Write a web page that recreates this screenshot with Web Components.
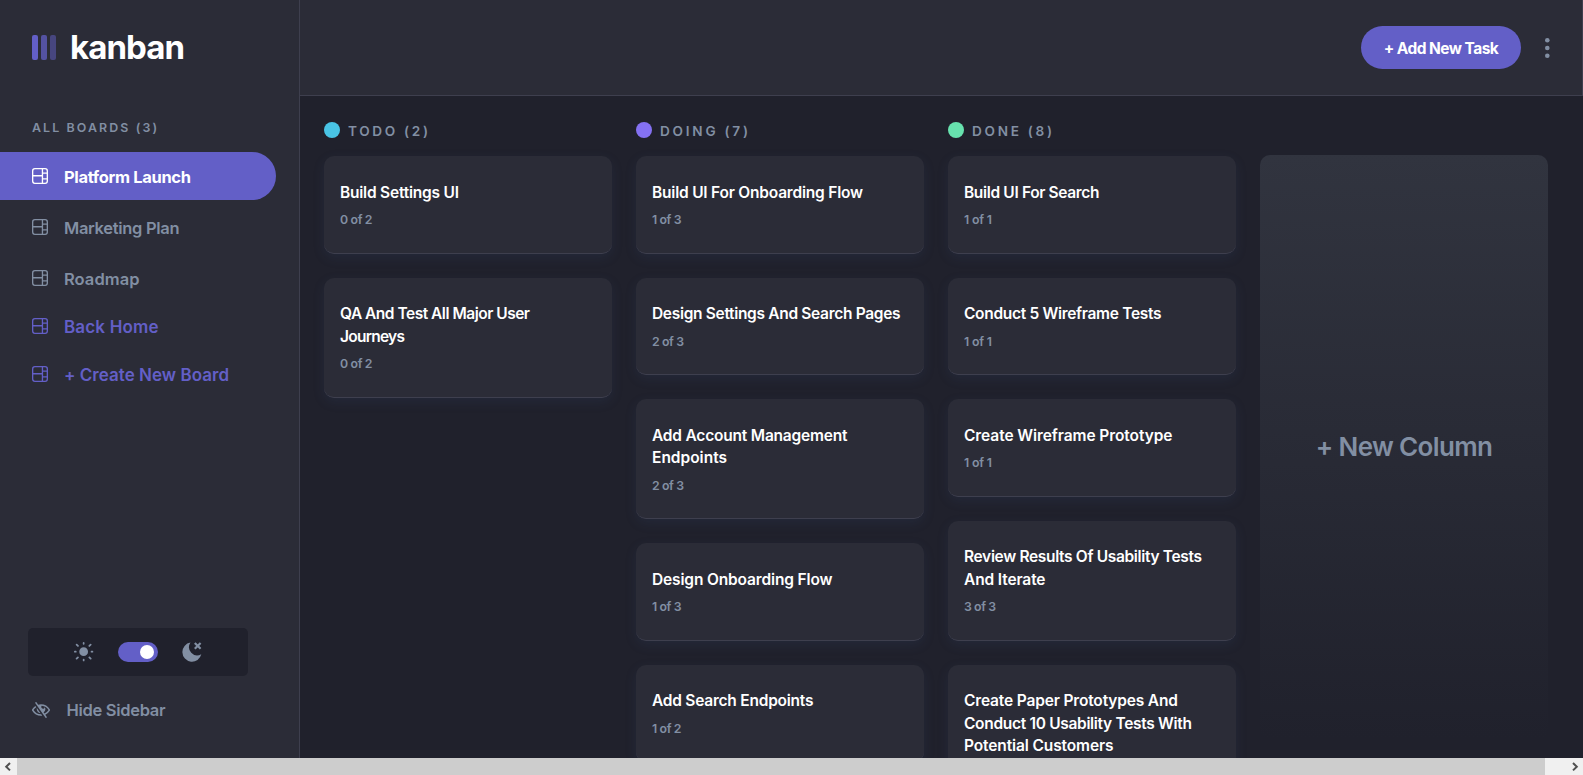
<!DOCTYPE html>
<html lang="en">
<head>
<meta charset="utf-8">
<title>Kanban</title>
<style>
html,body{margin:0;height:100%;overflow:hidden;background:#20212c}
body{font-family:Inter,"Liberation Sans",sans-serif;color:#fff}
</style>
</head>
<body>
<kanban-app></kanban-app>
<script>
const define=(name,html,setup)=>customElements.define(name,class extends HTMLElement{
  connectedCallback(){
    if(this.shadowRoot)return;
    const r=this.attachShadow({mode:'open'});
    const t=document.createElement('template');
    t.innerHTML=typeof html==='function'?html(this):html;
    r.append(t.content.cloneNode(true));
    if(setup)setup(this,r);
  }
});

// One line of text, tracked so that it spans w pixels.
define('fit-text',e=>`<style>:host{display:block;white-space:nowrap}span{display:inline-block}</style><span>${e.getAttribute('text')}</span>`,(e,r)=>{
  const s=r.querySelector('span'),w=+e.getAttribute('w'),n=e.getAttribute('text').length;
  const natural=s.getBoundingClientRect().width;
  s.style.letterSpacing=((w-natural)/(n-1)).toFixed(3)+'px';
});

define('board-icon',`<style>:host{display:block;width:16px;height:16px}svg{display:block}</style>
<svg width="16" height="16" viewBox="0 0 16 16"><path fill="currentColor" d="M0 2.889A2.889 2.889 0 0 1 2.889 0H13.11A2.889 2.889 0 0 1 16 2.889V13.11A2.888 2.888 0 0 1 13.111 16H2.89A2.889 2.889 0 0 1 0 13.111V2.89Zm1.333 5.555v4.667c0 .859.697 1.556 1.556 1.556h6.889V8.444H1.333Zm8.445-1.333V1.333h-6.89A1.556 1.556 0 0 0 1.334 2.89V7.11h8.445Zm4.889-1.333H11.11v4.444h3.556V5.778Zm0 5.778H11.11v3.11h2a1.556 1.556 0 0 0 1.556-1.555v-1.555Zm0-7.112V2.89a1.555 1.555 0 0 0-1.556-1.556h-2v3.111h3.556Z"/></svg>`);

define('nav-item',e=>`<style>
:host{display:flex;align-items:center;box-sizing:border-box;width:276px;height:48px;padding-left:32px;gap:16px;color:#828fa3;font-size:16.5px;font-weight:600;line-height:20px}
:host([active]){background:#635fc7;color:#fff;border-radius:0 24px 24px 0;font-weight:700}
:host([accent]){color:#635fc7;font-size:17px}
board-icon{flex:none}
fit-text{margin-top:2px}</style><board-icon></board-icon><fit-text text="${e.getAttribute('label')}" w="${e.getAttribute('w')}"></fit-text>`);

define('app-logo',`<style>:host{display:flex;align-items:center;gap:14px;padding:0 32px;height:95px;font-size:33px;font-weight:700;line-height:40px}
svg{display:block}fit-text{margin-top:-2px}</style>
<svg width="24" height="25" viewBox="0 0 24 25"><g fill="#635fc7"><rect width="6" height="25" rx="2"/><rect x="9" width="6" height="25" rx="2" opacity=".75"/><rect x="18" width="6" height="25" rx="2" opacity=".5"/></g></svg>
<fit-text text="kanban" w="115"></fit-text>`);

define('theme-switch',`<style>:host{display:flex;align-items:center;justify-content:center;gap:24px;width:220px;height:48px;margin-left:28px;background:#20212c;border-radius:5px}
svg{display:block}.t{width:32px;height:14px;padding:3px 4px;background:#635fc7;border-radius:10px;display:flex;justify-content:flex-end}.t i{width:14px;height:14px;border-radius:50%;background:#fff}</style>
<svg width="20" height="20" viewBox="0 0 19 19"><path fill="#828FA3" d="M9.167 15.833a.833.833 0 0 1 .833.834v.833a.833.833 0 0 1-1.667 0v-.833a.833.833 0 0 1 .834-.834ZM3.75 13.75a.833.833 0 0 1 .59 1.422l-1.25 1.25a.833.833 0 0 1-1.18-1.178l1.25-1.25a.833.833 0 0 1 .59-.244Zm10.833 0c.221 0 .433.088.59.244l1.25 1.25a.833.833 0 0 1-1.179 1.178l-1.25-1.25a.833.833 0 0 1 .59-1.422ZM9.167 5a4.167 4.167 0 1 1 0 8.334 4.167 4.167 0 0 1 0-8.334Zm-7.5 3.333a.833.833 0 0 1 0 1.667H.833a.833.833 0 1 1 0-1.667h.834Zm15.833 0a.833.833 0 0 1 0 1.667h-.833a.833.833 0 0 1 0-1.667h.833Zm-1.667-6.666a.833.833 0 0 1 .59 1.422l-1.25 1.25a.833.833 0 1 1-1.179-1.178l1.25-1.25a.833.833 0 0 1 .59-.244Zm-13.333 0c.221 0 .433.088.59.244l1.25 1.25a.833.833 0 0 1-1.18 1.178L1.91 3.09a.833.833 0 0 1 .59-1.422ZM9.167 0A.833.833 0 0 1 10 .833v.834a.833.833 0 1 1-1.667 0V.833A.833.833 0 0 1 9.167 0Z"/></svg>
<div class="t"><i></i></div>
<svg width="20" height="20" viewBox="0 0 20 20"><path fill="#828FA3" d="M8.474.593A9.6 9.6 0 1 0 19.3 12.3 8.2 8.2 0 0 1 8.474.593Z"/><path stroke="#828FA3" stroke-width="2.2" d="m12.8 1 5.8 5.8M18.6 1l-5.8 5.8"/></svg>`);

define('hide-sidebar',`<style>:host{display:flex;align-items:center;gap:16.5px;padding-left:32px;color:#828fa3;font-size:16.5px;font-weight:600;line-height:20px}svg{display:block}</style>
<svg width="18" height="16" viewBox="0 0 18 16"><path fill="currentColor" d="M8.522 11.223a4.252 4.252 0 0 1-3.654-5.22l3.654 5.22ZM9 12.25A8.685 8.685 0 0 1 1.5 8a8.612 8.612 0 0 1 2.76-2.864l-.86-1.23A10.112 10.112 0 0 0 .208 7.238a1.5 1.5 0 0 0 0 1.524A10.187 10.187 0 0 0 9 13.75c.414 0 .828-.025 1.239-.074l-1-1.43A8.88 8.88 0 0 1 9 12.25Zm8.792-3.488a10.14 10.14 0 0 1-4.486 4.046l1.504 2.148a.375.375 0 0 1-.092.523l-.648.453a.375.375 0 0 1-.523-.092L3.19 1.044A.375.375 0 0 1 3.282.52L3.93.068a.375.375 0 0 1 .523.092l1.735 2.479A10.308 10.308 0 0 1 9 2.25c3.746 0 7.031 2 8.792 4.988a1.5 1.5 0 0 1 0 1.524ZM16.5 8a8.674 8.674 0 0 0-6.755-4.219A1.75 1.75 0 1 0 12.75 5v-.001a4.25 4.25 0 0 1-1.154 5.366l.834 1.192A8.641 8.641 0 0 0 16.5 8Z"/></svg>
<fit-text text="Hide Sidebar" w="99"></fit-text>`);

define('side-bar',`<style>:host{display:flex;flex-direction:column;box-sizing:border-box;width:300px;height:100%;flex:none;background:#2b2c37;border-right:1px solid #3e3f4e}
h3{margin:25px 0 16px 32px;font-size:12.4px;font-weight:600;line-height:16px;color:#828fa3}
nav{display:flex;flex-direction:column}.g{margin-bottom:3px}
theme-switch{margin-top:auto}hide-sidebar{margin:24px 0 38px}</style>
<app-logo></app-logo>
<h3><fit-text text="ALL BOARDS (3)" w="125"></fit-text></h3>
<nav><nav-item class="g" active label="Platform Launch" w="127"></nav-item><nav-item class="g" label="Marketing Plan" w="115.5"></nav-item><nav-item label="Roadmap" w="75.5"></nav-item><nav-item accent label="Back Home" w="94.5"></nav-item><nav-item accent label="+ Create New Board" w="165"></nav-item></nav>
<theme-switch></theme-switch><hide-sidebar></hide-sidebar>`);

define('top-bar',`<style>:host{display:flex;align-items:center;justify-content:flex-end;box-sizing:border-box;height:96px;padding-right:32px;background:#2b2c37;border-bottom:1px solid #3e3f4e;border-right:1px solid #3e3f4e}
button{all:unset;display:flex;align-items:center;justify-content:center;width:160px;height:43px;border-radius:22px;background:#635fc7;font-size:15.5px;font-weight:700;line-height:20px;margin-right:24px}fit-text{margin-top:2px}svg{display:block}</style>
<button><fit-text text="+ Add New Task" w="115"></fit-text></button>
<svg width="5" height="20" viewBox="0 0 5 20" overflow="visible"><g fill="#828FA3"><circle cx="2.3" cy="2.3" r="2.3"/><circle cx="2.3" cy="10" r="2.3"/><circle cx="2.3" cy="17.7" r="2.3"/></g></svg>`);

define('task-card',e=>`<style>:host{display:block;box-sizing:border-box;padding:25.6px 16px 24.5px;background:#2b2c37;border-bottom:1px solid #3e3f4e;border-radius:10px;box-shadow:0 4px 12px rgba(54,78,126,.16)}
.l{font-size:15.5px;font-weight:600;line-height:22.4px}.s{font-size:12.3px;font-weight:600;line-height:16px;margin-top:8.1px;color:#828fa3}</style>
${e.getAttribute('lines').split('|').map(l=>{const[t,w]=l.split('~');return`<fit-text class="l" text="${t}" w="${w}"></fit-text>`}).join('')}
${e.getAttribute('sub')?`<fit-text class="s" text="${e.getAttribute('sub')}" w="${e.getAttribute('sw')}"></fit-text>`:''}`);

define('board-column',e=>`<style>:host{display:flex;flex-direction:column;gap:24px;width:288px;flex:none}
header{display:flex;align-items:flex-start;gap:8px;height:10px}
i{width:16px;height:16px;border-radius:50%;background:${e.getAttribute('color')}}
fit-text{font-size:13.6px;font-weight:600;line-height:18px;color:#828fa3}</style>
<header><i></i><fit-text text="${e.getAttribute('label')}" w="${e.getAttribute('w')}"></fit-text></header><slot></slot>`);

define('new-column',`<style>:host{display:flex;align-items:center;justify-content:center;width:288px;height:584px;flex:none;margin-top:33px;border-radius:10px;background:linear-gradient(180deg,#31343f,#20212c);color:#828fa3;font-size:26px;font-weight:600;line-height:32px}</style><fit-text text="+ New Column" w="177"></fit-text>`);

define('scroll-bar',`<style>:host{display:flex;height:17px;background:#f0f0f0}span{width:17px;height:17px}b{flex:1;background:#cdcdcd;margin-right:21px}svg{display:block}</style>
<span><svg width="17" height="17"><path d="M10 5 6.2 8.7l3.8 3.7" fill="none" stroke="#505050" stroke-width="2"/></svg></span><b></b><span><svg width="17" height="17"><path d="m7 5 3.8 3.7L7 12.4" fill="none" stroke="#505050" stroke-width="2"/></svg></span>`);

const C=(label,w,color,cards)=>`<board-column label="${label}" w="${w}" color="${color}">${cards.map(([l,s,sw])=>`<task-card lines="${l}" sub="${s||''}" sw="${sw||0}"></task-card>`).join('')}</board-column>`;
define('kanban-app',`<style>:host{display:flex;flex-direction:column;height:775px;overflow:hidden}
.app{display:flex;height:758px;min-height:0}main{flex:1;min-width:0;display:flex;flex-direction:column}
section{display:flex;flex:1;min-height:0;gap:24px;padding:26px 24px 0;align-items:flex-start;overflow:hidden;background:#20212c}</style>
<div class="app"><side-bar></side-bar><main><top-bar></top-bar><section>
${C('TODO (2)',80,'#49c4e5',[['Build Settings UI~119','0 of 2',32.5],['QA And Test All Major User~190|Journeys~65','0 of 2',32.5]])}
${C('DOING (7)',88,'#8471f2',[['Build UI For Onboarding Flow~211','1 of 3',29.5],['Design Settings And Search Pages~248.5','2 of 3',32],['Add Account Management~195.5|Endpoints~75','2 of 3',32],['Design Onboarding Flow~180.5','1 of 3',29.5],['Add Search Endpoints~161.5','1 of 2',29.5]])}
${C('DONE (8)',80,'#67e2ae',[['Build UI For Search~135.5','1 of 1',28],['Conduct 5 Wireframe Tests~197.5','1 of 1',28],['Create Wireframe Prototype~208.5','1 of 1',28],['Review Results Of Usability Tests~238|And Iterate~81.5','3 of 3',32],['Create Paper Prototypes And~214|Conduct 10 Usability Tests With~228|Potential Customers~149.5']])}
<new-column></new-column></section></main></div><scroll-bar></scroll-bar>`);
</script>
</body>
</html>
